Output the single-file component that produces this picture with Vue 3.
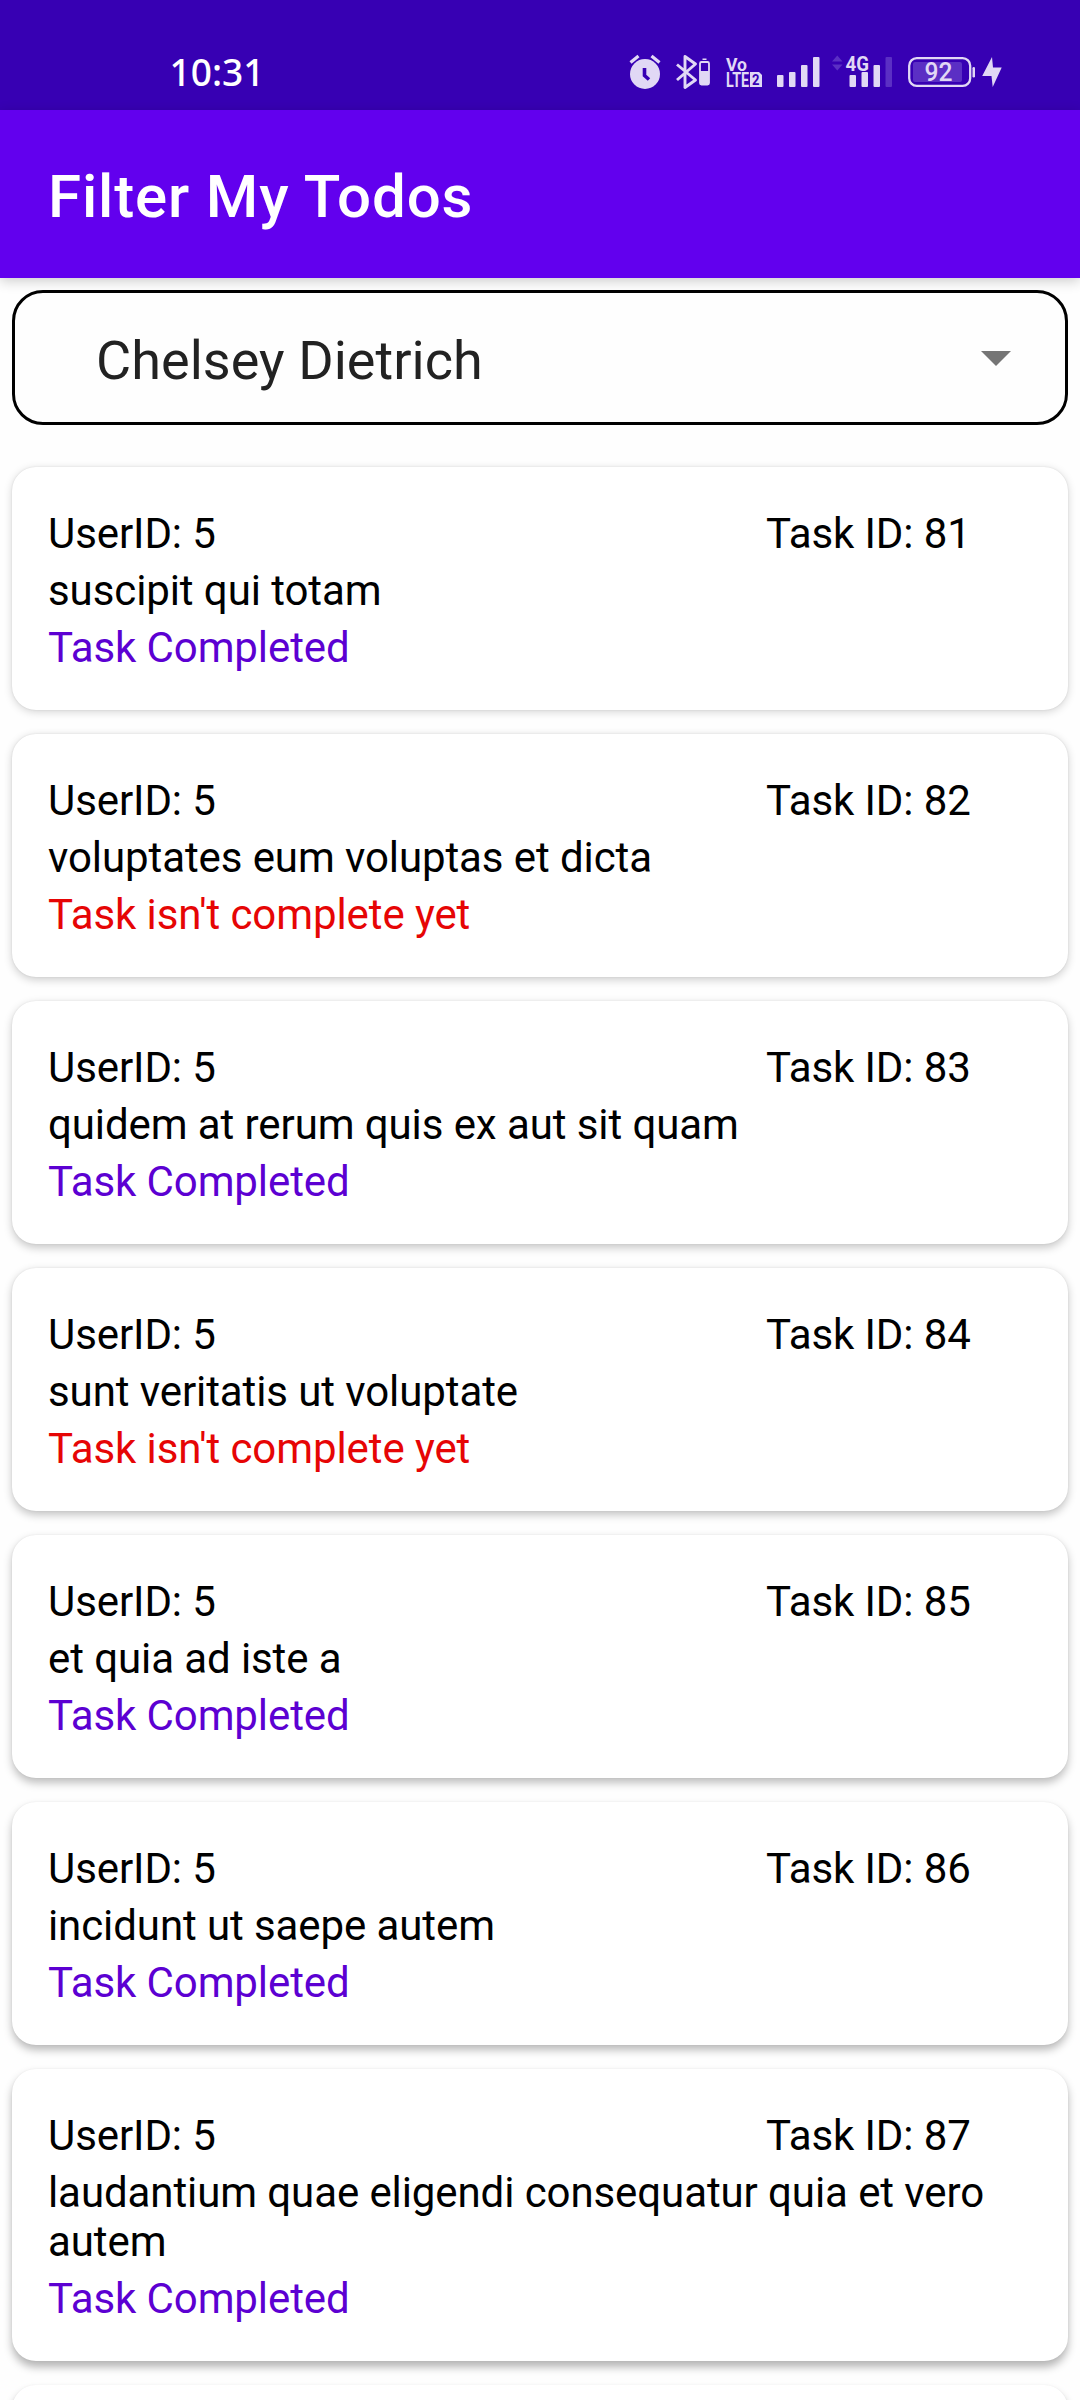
<script setup>
const selectedUser = 'Chelsey Dietrich'

const todos = [
  { id: 81, title: 'suscipit qui totam', completed: true },
  { id: 82, title: 'voluptates eum voluptas et dicta', completed: false },
  { id: 83, title: 'quidem at rerum quis ex aut sit quam', completed: true },
  { id: 84, title: 'sunt veritatis ut voluptate', completed: false },
  { id: 85, title: 'et quia ad iste a', completed: true },
  { id: 86, title: 'incidunt ut saepe autem', completed: true },
  { id: 87, title: 'laudantium quae eligendi consequatur quia et vero autem', completed: true },
]

// Elevation shadow gets longer and darker further down the screen.
function elevation(index) {
  const y = 2 + index * 0.6
  const alpha = 0.17 + index * 0.02
  return { boxShadow: `0 ${y}px 8px rgba(0, 0, 0, ${alpha}), 0 0 2px rgba(0, 0, 0, ${0.1 - index * 0.008})` }
}
</script>

<template>
  <div class="screen">
    <header class="status">
      <svg class="clock" width="120" height="60" viewBox="160 40 120 60">
        <text x="169.500" y="86" textLength="95" lengthAdjust="spacingAndGlyphs">10:31</text>
      </svg>
      <svg class="tray" width="400" height="44" viewBox="620 50 400 44">
        <g class="alarm">
          <circle cx="645" cy="74" r="15" fill="#e1d8f5" />
          <path d="M630.500 62.500l8-6.500M659.500 62.500l-8-6.500" stroke="#e1d8f5" stroke-width="3.200" fill="none" />
          <path d="M644.500 68v7.500l4.500 4" stroke="#3700b3" stroke-width="3.600" fill="none" />
        </g>
        <path d="M677 64.500l18.500 15.500-10.500 7.500V56.500l10.500 7.500-18.500 16" stroke="#e1d8f5" stroke-width="2.900" fill="none" stroke-linejoin="round" />
        <rect x="702.500" y="58.500" width="4" height="1.500" fill="#e1d8f5" />
        <rect x="700" y="62" width="9" height="22.500" rx="1.500" stroke="#e1d8f5" stroke-width="1.800" fill="none" />
        <rect x="700" y="71" width="9" height="13.500" fill="#e1d8f5" />
        <g class="net">
          <text x="726" y="71" font-size="19" textLength="21" lengthAdjust="spacingAndGlyphs">Vo</text>
          <text x="726" y="87" font-size="20.500" textLength="23" lengthAdjust="spacingAndGlyphs">LTE</text>
          <path d="M750 72h9l3 3v12h-12z" />
          <text class="sim" x="752" y="85" font-size="14.500" textLength="7.500" lengthAdjust="spacingAndGlyphs">2</text>
          <text x="845.500" y="70.500" font-size="21" textLength="23.500" lengthAdjust="spacingAndGlyphs">4G</text>
        </g>
        <g fill="#e1d8f5">
          <rect x="777" y="75" width="6.500" height="12" rx="1" />
          <rect x="789" y="72" width="6.500" height="15" rx="1" />
          <rect x="801" y="65" width="6.500" height="22" rx="1" />
          <rect x="813" y="57" width="6.500" height="30" rx="1" />
          <rect x="849.500" y="75" width="6.500" height="12" rx="1" />
          <rect x="861.500" y="72" width="6.500" height="15" rx="1" />
          <rect x="873.500" y="65" width="6.500" height="22" rx="1" />
        </g>
        <g fill="#5b2fc4">
          <rect x="885.500" y="57" width="6.500" height="30" rx="1" />
          <path d="M832 61.500l5.300-6 5.200 6zM832 64.500l5.300 6 5.200-6z" />
        </g>
        <rect x="913" y="62" width="49" height="20" rx="2" fill="#5b2fc4" />
        <rect x="909.200" y="58.200" width="61" height="27.600" rx="7.500" stroke="#e1d8f5" stroke-width="2.300" fill="none" />
        <rect x="972.500" y="67" width="2.500" height="10.500" rx="1.200" fill="#e1d8f5" />
        <text class="level" x="924.500" y="81" textLength="28" lengthAdjust="spacingAndGlyphs">92</text>
        <path d="M992 57l-9.800 19h9.300l1.200 11 9-19.500h-8.700z" fill="#e1d8f5" />
      </svg>
    </header>

    <div class="appbar"><h1>Filter My Todos</h1></div>

    <div class="select">
      <span>{{ selectedUser }}</span>
      <svg width="30" height="15" viewBox="0 0 30 15"><path d="M0 0h30L15 15z" fill="#757575" /></svg>
    </div>

    <main class="list">
      <article v-for="(todo, i) in todos" :key="todo.id" class="card" :style="elevation(i)">
        <div class="ids">
          <span>UserID: 5</span>
          <span class="task">Task ID: {{ todo.id }}</span>
        </div>
        <p>{{ todo.title }}</p>
        <p :class="todo.completed ? 'done' : 'pending'">
          {{ todo.completed ? 'Task Completed' : "Task isn't complete yet" }}
        </p>
      </article>
      <article class="card" :style="elevation(todos.length)"></article>
    </main>
  </div>
</template>

<style>
body {
  margin: 0;
  background: #fff;
}
</style>

<style scoped>
.screen {
  width: 1080px;
  height: 2400px;
  overflow: hidden;
  display: flex;
  flex-direction: column;
  background: #fefefe;
  font-family: Roboto, sans-serif;
  color: #000;
}
.status {
  height: 110px;
  flex: none;
  box-sizing: border-box;
  padding: 40px 60px 0 160px;
  display: flex;
  justify-content: space-between;
  background: #3700b3;
}
.clock {
  font: 500 37.500px "Noto Sans", sans-serif;
  fill: #fff;
}
.tray {
  margin-top: 10px;
}
.net {
  fill: #e1d8f5;
  font-family: Roboto, sans-serif;
  font-weight: 700;
}
.sim {
  fill: #3700b3;
}
.level {
  fill: #e1d8f5;
  font: 500 25px Roboto, sans-serif;
}
.appbar {
  height: 168px;
  flex: none;
  display: flex;
  align-items: center;
  padding-left: 48px;
  background: #6200ee;
  box-shadow: 0 3px 12px rgba(0, 0, 0, 0.2);
}
h1 {
  margin: 6px 0 0;
  font-size: 60px;
  line-height: 70px;
  font-weight: 500;
  letter-spacing: 0.85px;
  color: #fff;
}
.select {
  box-sizing: border-box;
  height: 135px;
  flex: none;
  margin: 12px 12px 0;
  padding: 2px 54px 0 81px;
  border: 3px solid #000;
  border-radius: 31px;
  display: flex;
  align-items: center;
  justify-content: space-between;
  background: #fefefe;
  font-size: 54px;
  line-height: 64px;
  letter-spacing: 0.05px;
  color: #222;
}
.select span {
  margin-top: 4px;
}
.list {
  display: flex;
  flex-direction: column;
  gap: 24px;
  margin: 42px 12px 0;
}
.card {
  box-sizing: border-box;
  min-height: 243px;
  flex: none;
  padding: 42px 36px 38px;
  display: flex;
  flex-direction: column;
  gap: 8px;
  border-radius: 24px;
  background: #fff;
  font-size: 42px;
  line-height: 49px;
  letter-spacing: -0.09px;
}
.ids {
  display: flex;
  justify-content: space-between;
}
.task {
  width: 266px;
}
p {
  margin: 0;
}
.done {
  color: #5c00d2;
}
.pending {
  color: #e60505;
}
</style>
